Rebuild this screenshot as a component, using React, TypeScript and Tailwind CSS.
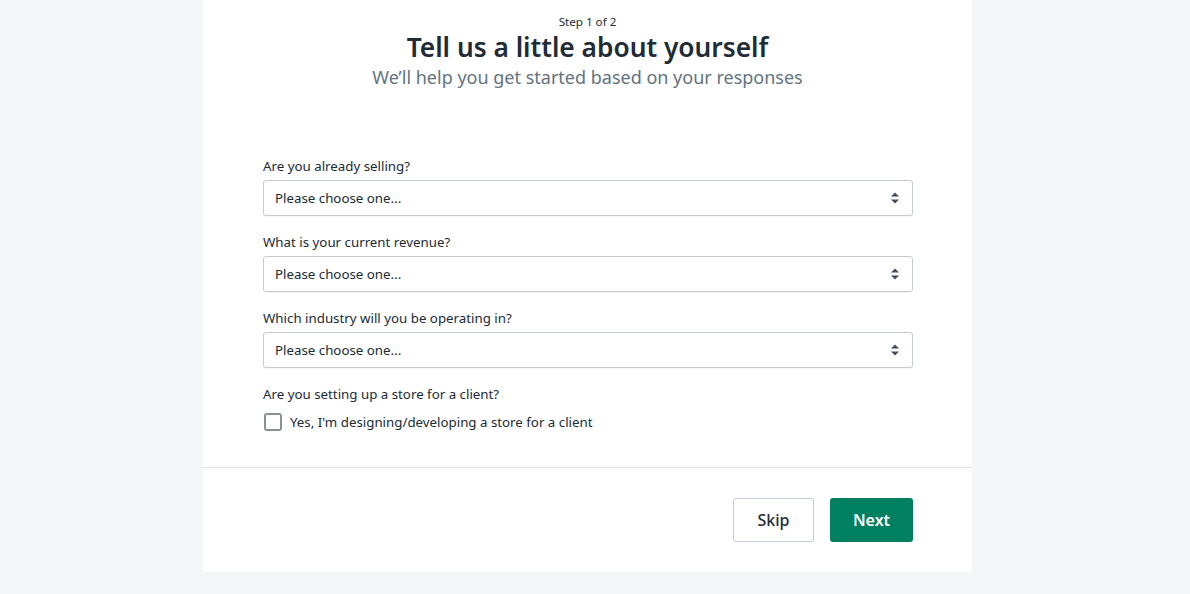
import { ChangeEvent, useState } from 'react';

const questions = [
  { id: 'selling', label: 'Are you already selling?' },
  { id: 'revenue', label: 'What is your current revenue?' },
  { id: 'industry', label: 'Which industry will you be operating in?' },
];

const SelectArrows = () => (
  <svg width="10" height="14" viewBox="0 0 10 14" className="pointer-events-none absolute right-[13px] top-1/2 -translate-y-1/2">
    <path d="M5 1.5 L9 5.5 H1 Z" fill="#454f5b" />
    <path d="M5 12.5 L9 8.5 H1 Z" fill="#454f5b" />
  </svg>
);

const App = () => {
  const [answers, setAnswers] = useState<Record<string, string>>({});
  const [forClient, setForClient] = useState(false);

  const onSelect = (id: string) => (e: ChangeEvent<HTMLSelectElement>) =>
    setAnswers({ ...answers, [id]: e.target.value });

  return (
    <div className="min-h-[594px] bg-[#f4f6f8] font-['Noto_Sans',_'Open_Sans',_sans-serif] text-[#212b36]">
      <div className="ml-[203px] w-[769px] bg-white">
        {/* Header */}
        <div className="flex flex-col items-center pt-[14px]">
          <p className="text-[11.6px] leading-[16px]">Step 1 of 2</p>
          <h1 className="mt-[1px] text-[26.3px] font-semibold leading-[32px]">Tell us a little about yourself</h1>
          <p className="mt-[2px] text-[18px] leading-[24px] text-[#637381]">We’ll help you get started based on your responses</p>
        </div>

        {/* Form */}
        <div className="pl-[60px] pr-[59px] pt-[67px] pb-[35px]">
          {questions.map((q) => (
            <div key={q.id} className="mb-4">
              <label htmlFor={q.id} className="block text-[13.3px] leading-[20px]">
                {q.label}
              </label>
              <div className="relative mt-1">
                <select
                  id={q.id}
                  value={answers[q.id] || ''}
                  onChange={onSelect(q.id)}
                  className="h-[36px] w-full appearance-none rounded-[3px] border border-[#c4cdd5] bg-white pl-[11px] pt-[1px] text-[13.3px] text-[#212b36] shadow-[0_1px_0_rgba(22,29,37,0.05)]"
                >
                  <option value="">Please choose one...</option>
                </select>
                <SelectArrows />
              </div>
            </div>
          ))}

          <p className="text-[13.3px] leading-[20px]">Are you setting up a store for a client?</p>
          <label className="mt-2 flex h-[20px] cursor-pointer items-center">
            <input
              type="checkbox"
              checked={forClient}
              onChange={(e) => setForClient(e.target.checked)}
              className="ml-[1px] h-[18px] w-[18px] appearance-none rounded-[3px] border-2 border-[#8c9196] bg-white"
            />
            <span className="ml-[8px] text-[13.3px] leading-[20px]">Yes, I'm designing/developing a store for a client</span>
          </label>
        </div>

        {/* Footer */}
        <div className="flex justify-end gap-4 border-t border-[#e4e5e7] px-[59px] py-[30px]">
          <button className="h-[44px] w-[81px] rounded-[3px] border border-[#c4cdd5] bg-white text-[16px] font-medium text-[#212b36]">
            Skip
          </button>
          <button className="h-[44px] w-[83px] rounded-[3px] bg-[#008060] text-[16px] font-semibold text-white">
            Next
          </button>
        </div>
      </div>
    </div>
  );
};

export default App;
